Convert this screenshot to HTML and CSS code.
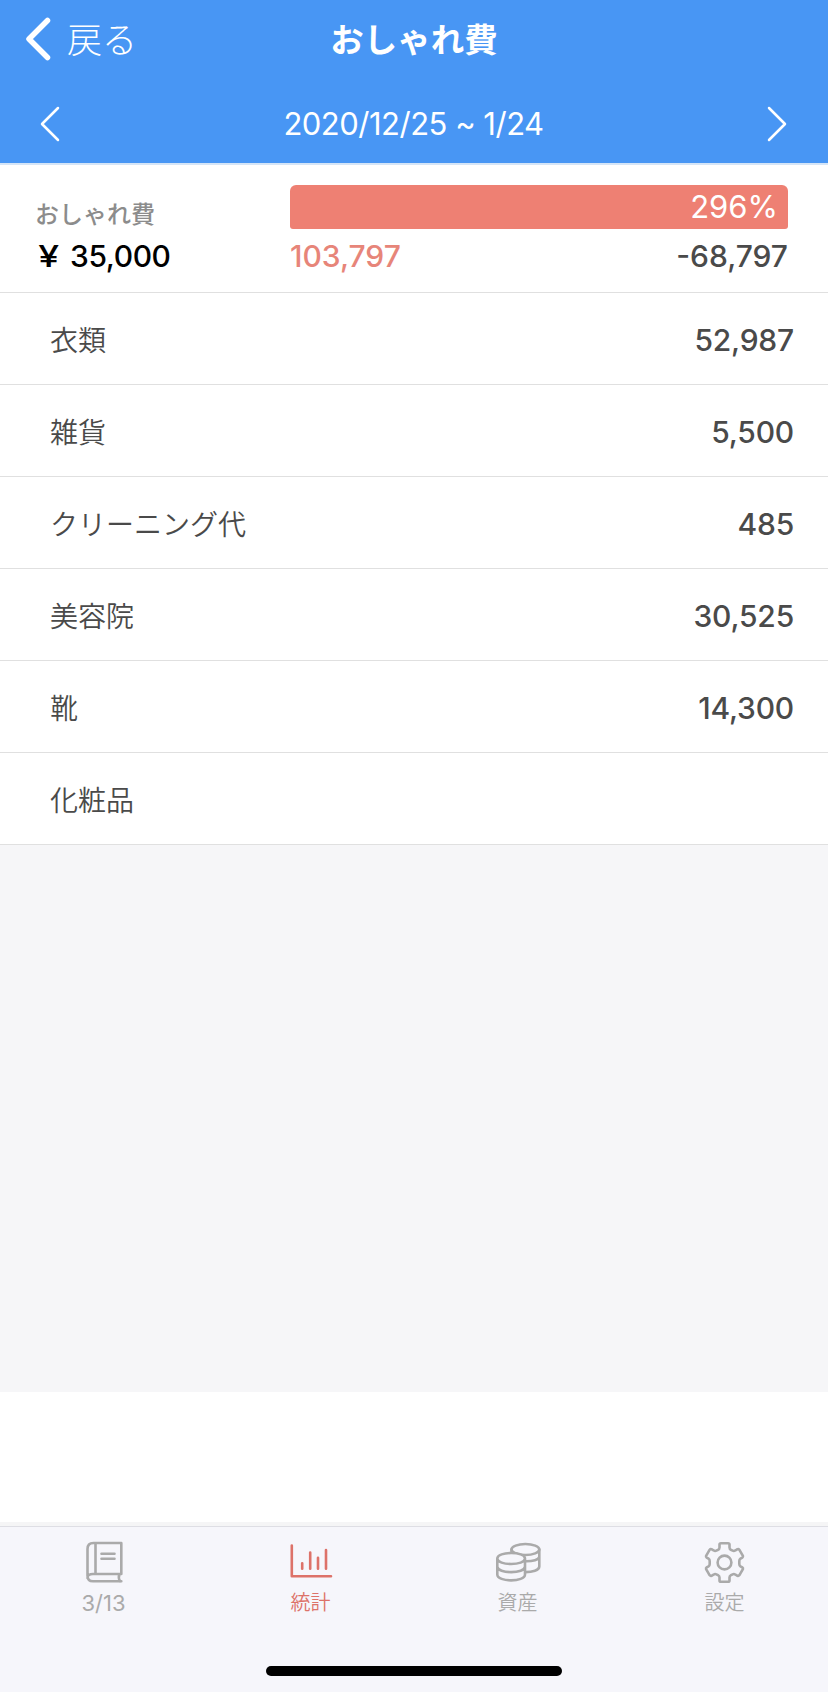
FILE: index.html
```html
<!DOCTYPE html>
<html lang="ja">
<head>
<meta charset="utf-8">
<title>おしゃれ費</title>
<link rel="stylesheet" href="styles.css">
</head>
<body>
<div class="screen">
  <header class="header">
    <div class="nav">
      <div class="back">
        <svg class="back-icon" width="28" height="46" viewBox="0 0 28 46"><path d="M23.500 4.500L5 23L23.500 41.500"/></svg>
        <span class="back-label">戻る</span>
      </div>
      <h1 class="title">おしゃれ費</h1>
    </div>
    <div class="period">
      <svg class="arrow" width="20" height="36" viewBox="0 0 20 36"><path d="M18 2L2 18L18 34"/></svg>
      <span class="dates">2020/12/25 ~ 1/24</span>
      <svg class="arrow" width="20" height="36" viewBox="0 0 20 36"><path d="M2 2L18 18L2 34"/></svg>
    </div>
  </header>
  <section class="summary">
    <div class="budget">
      <div class="budget-name">おしゃれ費</div>
      <div class="budget-amount"><span class="yen">¥</span><span>35,000</span></div>
    </div>
    <div class="usage">
      <div class="bar">296%</div>
      <div class="totals"><span class="spent">103,797</span><span class="left">-68,797</span></div>
    </div>
  </section>
  <ul class="list">
    <li class="row"><span class="name">衣類</span><span class="value">52,987</span></li>
    <li class="row"><span class="name">雑貨</span><span class="value">5,500</span></li>
    <li class="row"><span class="name">クリーニング代</span><span class="value">485</span></li>
    <li class="row"><span class="name">美容院</span><span class="value">30,525</span></li>
    <li class="row"><span class="name">靴</span><span class="value">14,300</span></li>
    <li class="row"><span class="name">化粧品</span></li>
  </ul>
  <div class="empty"></div>
  <div class="blank"></div>
  <div class="edge"></div>
  <nav class="tabs">
    <div class="tab">
      <svg class="icon" width="48" height="48" viewBox="0 0 48 48"><path d="M41.300 36V5H13.500Q7.500 5 7.500 11V37.500Q7.500 43.300 13 43.300H41.300M41.300 36H13Q7.500 36 7.500 40M15.500 5V36M39.500 36Q38 39.500 40 43.300M21.500 15.800H34.500M21.500 20.800H34.500"/></svg>
      <span class="tab-label latin">3/13</span>
    </div>
    <div class="tab active">
      <svg class="icon" width="48" height="48" viewBox="0 0 48 48"><path d="M4.800 7.500V38.300H44M15.200 25.300V30.700M23.200 14.500V30.700M31 19.800V30.700M39 12V30.700"/></svg>
      <span class="tab-label">統計</span>
    </div>
    <div class="tab">
      <svg class="icon" width="48" height="48" viewBox="0 0 48 48"><path d="M17.500 11.500V28.500C17.500 36 45.300 36 45.300 28.500V11.500M17.500 17C17.500 25 45.300 25 45.300 18.500"/><ellipse cx="31.400" cy="11.500" rx="13.900" ry="5.500"/><path class="front" d="M3.300 20.500V36.500C3.300 44.300 31 44.300 31 36.500V20.500C31 13.200 3.300 13.200 3.300 20.500C3.300 27.800 31 27.800 31 20.500M3.300 28.500C3.300 36 31 36 31 28.500"/></svg>
      <span class="tab-label">資産</span>
    </div>
    <div class="tab">
      <svg class="icon" width="48" height="48" viewBox="0 0 48 48"><path d="M18.500 6.500Q18.500 5.200 20 5.200H27Q28.500 5.200 28.500 6.500V9.500Q28.500 11 30 11.800L31.700 12.700Q33 13.400 34.500 12.300L36.500 11.200Q37.600 10.800 38.300 11.700L41.900 17.800Q42.300 18.900 41.300 19.600L39.500 20.700Q38.300 21.500 38.300 23V26Q38.300 27.500 39.500 28.300L41.300 29.400Q42.300 30.100 41.900 31.200L38.300 37.300Q37.600 38.200 36.500 37.800L34.500 36.700Q33 35.600 31.700 36.300L30 37.200Q28.500 38 28.500 39.500V42.500Q28.500 43.800 27 43.800H20Q18.500 43.800 18.500 42.500V39.500Q18.500 38 17 37.200L15.300 36.300Q14 35.600 12.500 36.700L10.500 37.800Q9.400 38.200 8.700 37.300L5.100 31.200Q4.700 30.100 5.700 29.400L7.500 28.300Q8.700 27.500 8.700 26V23Q8.700 21.500 7.500 20.700L5.700 19.600Q4.700 18.900 5.100 17.800L8.700 11.700Q9.400 10.800 10.500 11.200L12.500 12.300Q14 13.400 15.300 12.700L17 11.800Q18.500 11 18.500 9.500Z"/><circle cx="23.500" cy="24.500" r="6.900"/></svg>
      <span class="tab-label">設定</span>
    </div>
  </nav>
  <footer class="home"><div class="home-bar"></div></footer>
</div>
</body>
</html>
```
FILE: styles.css
```css
* { box-sizing: border-box; }
body { margin: 0; background: #fff; }
.screen {
  width: 828px;
  height: 1692px;
  display: flex;
  flex-direction: column;
  overflow: hidden;
  font-family: Inter, "Noto Sans CJK JP", sans-serif;
  color: #4a4a4a;
}
.header {
  height: 165px;
  background: #4896f4;
  border-bottom: 2px solid #d5e5f7;
  color: #fff;
}
svg { fill: none; stroke: currentColor; display: block; stroke-linecap: round; stroke-linejoin: round; }
.nav {
  height: 78px;
  display: grid;
  grid-template-columns: 1fr auto 1fr;
  align-items: center;
}
.back { display: flex; align-items: center; padding-left: 24px; gap: 15px; }
.back-icon { stroke-width: 5.500; }
.back-label { padding-top: 1px; font-size: 35px; line-height: 48px; font-weight: 300; }
.title { margin: 0; padding-top: 2px; font-size: 33.500px; line-height: 48px; font-weight: 700; }
.period {
  height: 85px;
  padding: 9px 41px 3px 40px;
  display: flex;
  align-items: center;
  justify-content: space-between;
}
.arrow { stroke-width: 2.500; }
.dates { font-size: 31px; line-height: 40px; font-weight: 400; letter-spacing: -0.500px; }
.summary {
  height: 128px;
  display: flex;
  padding: 20px 40px 0 35px;
  border-bottom: 1px solid #e0e0e0;
}
.budget { width: 255px; }
.budget-name { margin-top: 13px; font-size: 24px; line-height: 34px; font-weight: 500; color: #8c8c8c; }
.budget-amount {
  display: flex;
  gap: 8px;
  margin-top: 6px;
  font-size: 30px;
  line-height: 36px;
  font-weight: 500;
  letter-spacing: -0.400px;
  color: #000;
}
.yen { width: 27px; text-align: center; transform: scaleX(1.250); }
.usage { flex: 1; }
.bar {
  height: 44px;
  padding-right: 10px;
  border-radius: 6px 6px 3px 3px;
  background: #ee8073;
  color: #fff;
  text-align: right;
  font-size: 31px;
  line-height: 44px;
  font-weight: 400;
}
.totals { display: flex; justify-content: space-between; margin-top: 9px; font-size: 30px; line-height: 36px; font-weight: 450; }
.spent { color: #e78579; }
.list { margin: 0; padding: 0; list-style: none; }
.row {
  height: 92px;
  display: flex;
  justify-content: space-between;
  align-items: center;
  padding: 0 34px 0 50px;
  border-bottom: 1px solid #e0e0e0;
}
.name { padding-top: 5px; font-size: 28px; line-height: 40px; font-weight: 350; }
.value { padding-top: 2px; font-size: 30px; line-height: 40px; font-weight: 500; letter-spacing: -0.200px; }
.empty { height: 547px; background: #f6f6f8; }
.blank { height: 130px; }
.edge { height: 4px; background: #f5f5f6; }
.tabs {
  height: 104px;
  display: grid;
  grid-template-columns: repeat(4, 1fr);
  border-top: 1px solid #dedee4;
  background: #f6f6fb;
  color: #aaa;
}
.tab { display: flex; flex-direction: column; align-items: center; padding-top: 11px; }
.tab.active { color: #dd7269; }
.icon { stroke-width: 2.600; }
.front { fill: #f6f6fb; }
.tab-label { margin-top: 2px; font-size: 20px; line-height: 30px; font-weight: 350; }
.latin { font-size: 22px; font-weight: 400; }
.home { flex: 1; background: #f6f6fb; padding-top: 36px; }
.home-bar { width: 296px; height: 10px; margin: 0 auto; border-radius: 5px; background: #000; }
```
